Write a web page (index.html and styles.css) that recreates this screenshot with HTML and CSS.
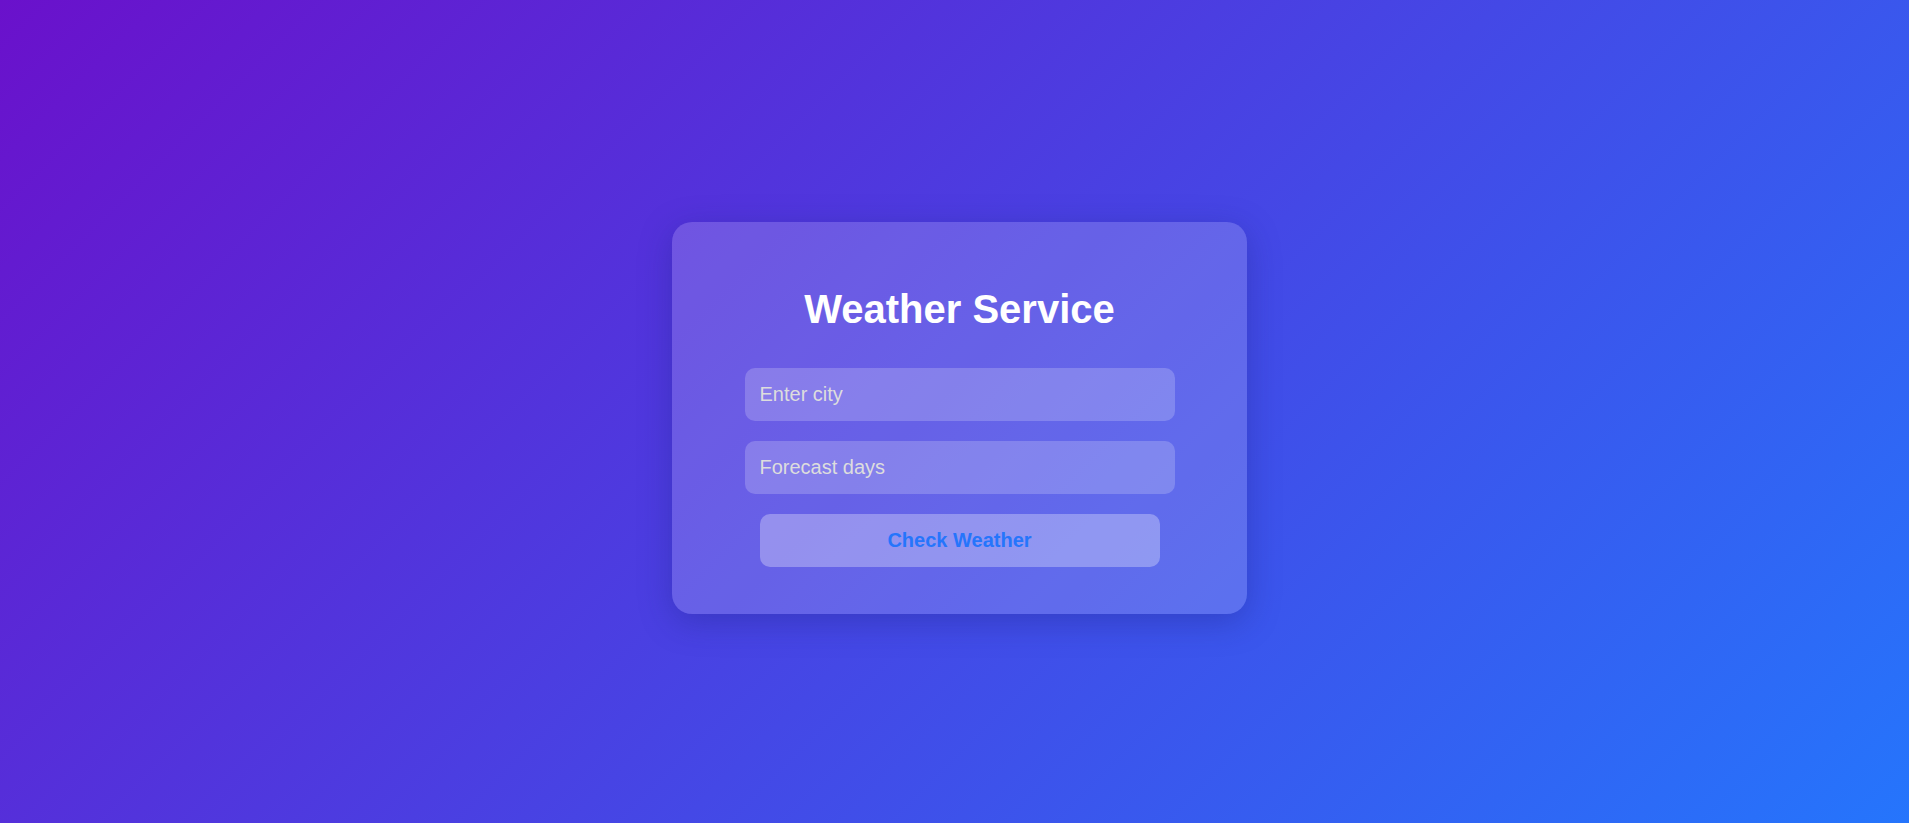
FILE: index.html
```html
<!DOCTYPE html>
<html lang="en">
<head>
<meta charset="utf-8">
<title>Weather Service</title>
<link rel="stylesheet" href="styles.css">
</head>
<body>
  <main class="page">
    <section class="card">
      <h1 class="title">Weather Service</h1>
      <form class="form">
        <input class="field" type="text" placeholder="Enter city">
        <input class="field" type="number" placeholder="Forecast days">
        <button class="btn" type="button">Check Weather</button>
      </form>
    </section>
  </main>
</body>
</html>
```
FILE: styles.css
```css
html, body {
  margin: 0;
  padding: 0;
  height: 100%;
}

body {
  font-family: "Liberation Sans", Arial, sans-serif;
  background: linear-gradient(135deg, #6a11cb 0%, #2575fc 100%);
  overflow: hidden;
}

.page {
  box-sizing: border-box;
  height: 100vh;
  display: flex;
  align-items: center;
  justify-content: center;
  padding: 13px 0 0 10px;
}

.card {
  box-sizing: border-box;
  width: 575px;
  padding: 64px 0 47px;
  border-radius: 20px;
  background: rgba(255, 255, 255, 0.17);
  box-shadow: 0 8px 32px rgba(31, 38, 135, 0.37);
  display: flex;
  flex-direction: column;
  align-items: center;
}

.title {
  margin: 0 0 36px;
  font-size: 40px;
  line-height: 46px;
  font-weight: 700;
  color: #ffffff;
  text-align: center;
}

.form {
  display: flex;
  flex-direction: column;
  align-items: center;
  gap: 20px;
}

.field {
  box-sizing: border-box;
  width: 430px;
  height: 53px;
  padding: 0 15px;
  border: none;
  outline: none;
  border-radius: 10px;
  background: rgba(255, 255, 255, 0.2);
  font-family: "Liberation Sans", Arial, sans-serif;
  font-size: 20px;
  color: #ffffff;
  -moz-appearance: textfield;
}

.field::-webkit-outer-spin-button,
.field::-webkit-inner-spin-button {
  -webkit-appearance: none;
  margin: 0;
}

.field::placeholder {
  color: #dddddd;
}

.btn {
  box-sizing: border-box;
  width: 400px;
  height: 53px;
  border: none;
  border-radius: 10px;
  background: rgba(255, 255, 255, 0.3);
  font-family: "Liberation Sans", Arial, sans-serif;
  font-size: 20px;
  font-weight: 700;
  color: #2575fc;
  cursor: pointer;
}
```
